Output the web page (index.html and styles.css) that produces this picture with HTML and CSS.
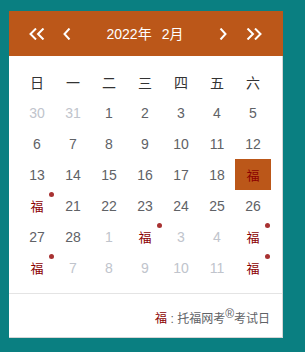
FILE: index.html
```html
<!DOCTYPE html>
<html lang="zh">
<head>
<meta charset="utf-8">
<link rel="stylesheet" href="styles.css">
</head>
<body>
<div class="card">
  <div class="head">
    <svg class="ico dbl" viewBox="0 0 16 12"><polyline points="7,0.5 1.5,6 7,11.5"/><polyline points="14.5,0.5 9,6 14.5,11.5"/></svg>
    <svg class="ico sgl prev" viewBox="0 0 8 12"><polyline points="6.5,0.5 1.5,6 6.5,11.5"/></svg>
    <div class="title"><span>2022年</span><span>2月</span></div>
    <svg class="ico sgl" viewBox="0 0 8 12"><polyline points="1.5,0.5 6.5,6 1.5,11.5"/></svg>
    <svg class="ico dbl next2" viewBox="0 0 16 12"><polyline points="1.5,0.5 7,6 1.5,11.5"/><polyline points="9,0.5 14.5,6 9,11.5"/></svg>
  </div>
  <div class="body">
    <div class="grid">
      <div class="wk">日</div><div class="wk">一</div><div class="wk">二</div><div class="wk">三</div><div class="wk">四</div><div class="wk">五</div><div class="wk">六</div>

      <div class="d off">30</div><div class="d off">31</div><div class="d">1</div><div class="d">2</div><div class="d">3</div><div class="d">4</div><div class="d">5</div>
      <div class="d">6</div><div class="d">7</div><div class="d">8</div><div class="d">9</div><div class="d">10</div><div class="d">11</div><div class="d">12</div>
      <div class="d">13</div><div class="d">14</div><div class="d">15</div><div class="d">16</div><div class="d">17</div><div class="d">18</div><div class="d fu sel">福</div>
      <div class="d fu dot">福</div><div class="d">21</div><div class="d">22</div><div class="d">23</div><div class="d">24</div><div class="d">25</div><div class="d">26</div>
      <div class="d">27</div><div class="d">28</div><div class="d off">1</div><div class="d fu dot">福</div><div class="d off">3</div><div class="d off">4</div><div class="d fu dot">福</div>
      <div class="d fu dot">福</div><div class="d off">7</div><div class="d off">8</div><div class="d off">9</div><div class="d off">10</div><div class="d off">11</div><div class="d fu dot">福</div>
    </div>
    <div class="foot"><span class="fu">福</span> : 托福网考<sup>®</sup>考试日</div>
  </div>
</div>
</body>
</html>
```

FILE: styles.css
```css
html, body {
  margin: 0;
  padding: 0;
}
body {
  background: #0a7f81;
  width: 305px;
  height: 352px;
  font-family: "Liberation Sans", "Noto Sans CJK SC", sans-serif;
  padding: 11px 0 0 9px;
  box-sizing: border-box;
}
.card {
  width: 274px;
}
.head {
  height: 45px;
  background: #bb5719;
  display: flex;
  align-items: center;
  padding: 0 21px 0 20px;
  color: #fff;
}
.ico {
  height: 12px;
  fill: none;
  stroke: #fff;
  stroke-width: 2;
  flex: none;
}
.dbl { width: 16px; }
.sgl { width: 8px; }
.prev { margin-left: 18px; }
.next2 { margin-left: 19px; }
.title {
  flex: 1;
  display: flex;
  justify-content: center;
  gap: 10px;
  font-size: 14px;
  line-height: 16px;
}
.body {
  background: #fff;
  border-right: 1px solid #d6d6d6;
  border-bottom: 1px solid #d6d6d6;
}
.grid {
  display: grid;
  grid-template-columns: repeat(7, 36px);
  grid-auto-rows: 31px;
  padding: 10px 0 10px 10px;
}
.wk {
  color: #333;
  font-size: 14px;
  display: flex;
  align-items: center;
  justify-content: center;
}
.d {
  position: relative;
  color: #606266;
  font-size: 14px;
  display: flex;
  align-items: center;
  justify-content: center;
}
.d.off { color: #c0c4cc; }
.fu { color: #8b0000; }
.d.fu { font-size: 13px; }
.d.sel { background: #bb5719; }
.dot::after {
  content: "";
  position: absolute;
  left: 30px;
  top: 2px;
  width: 5px;
  height: 5px;
  border-radius: 50%;
  background: #a83232;
}
.foot {
  border-top: 1px solid #e4e4e4;
  padding: 17px 12px 9px 0;
  text-align: right;
  font-size: 12px;
  line-height: 17px;
  color: #606266;
}
.foot .fu { color: #8b0000; }
.foot sup {
  font-size: 12px;
  line-height: 0;
  vertical-align: 5px;
}
```
